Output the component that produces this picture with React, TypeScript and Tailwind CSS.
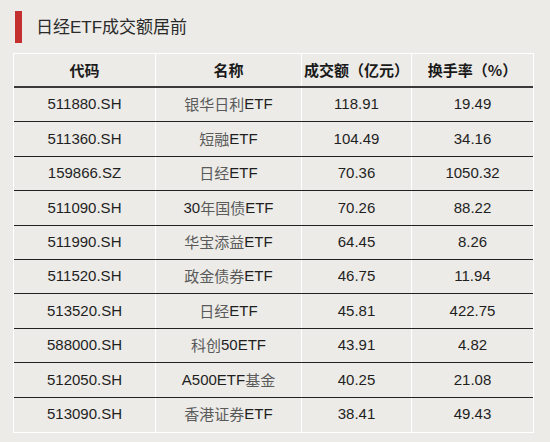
const rows: [string, string, string, string, string][] = [
  ["511880.SH", "银华日利", "ETF", "118.91", "19.49"],
  ["511360.SH", "短融", "ETF", "104.49", "34.16"],
  ["159866.SZ", "日经", "ETF", "70.36", "1050.32"],
  ["511090.SH", "30年国债", "ETF", "70.26", "88.22"],
  ["511990.SH", "华宝添益", "ETF", "64.45", "8.26"],
  ["511520.SH", "政金债券", "ETF", "46.75", "11.94"],
  ["513520.SH", "日经", "ETF", "45.81", "422.75"],
  ["588000.SH", "科创50", "ETF", "43.91", "4.82"],
  ["512050.SH", "A500ETF基金", "", "40.25", "21.08"],
  ["513090.SH", "香港证券", "ETF", "38.41", "49.43"],
]

const cjk = '"Noto Sans CJK SC", sans-serif'
const sans = '"Liberation Sans", "Noto Sans CJK SC", sans-serif'

function Name({ text, tail }: { text: string; tail: string }) {
  // split latin/digits from CJK so the CJK parts get the lighter grey
  const parts = (text + tail).split(/([A-Za-z0-9]+)/).filter(Boolean)
  return (
    <>
      {parts.map((p, i) =>
        /^[A-Za-z0-9]+$/.test(p) ? (
          <span key={i} className="text-[#1f1f1f]" style={{ fontFamily: sans }}>
            {p}
          </span>
        ) : (
          <span key={i} className="text-[#5a5a5a]" style={{ fontFamily: cjk }}>
            {p}
          </span>
        )
      )}
    </>
  )
}

export default function App() {
  return (
    <div className="h-[442px] w-[550px] bg-[#ecebe7] pt-[11px]">
      <div className="flex h-[32px] items-center pl-[15px]">
        <div className="h-[32px] w-[7px] bg-[#c4302f]" />
        <h1
          className="ml-[14px] text-[17px] leading-none text-[#2a2a2a]"
          style={{ fontFamily: sans }}
        >
          日经ETF成交额居前
        </h1>
      </div>

      <div className="ml-[13px] mt-[10px] w-[521px] border border-white">
        <div className="grid h-[34px] grid-cols-[142px_146px_110px_121px] border-b-2 border-[#3a3a3a] text-[15px] font-bold text-[#1a1a1a]">
          {["代码", "名称", "成交额（亿元）", "换手率（%）"].map((h, i) => (
            <div
              key={h}
              className={`flex items-center justify-center ${i < 3 ? "border-r border-white" : ""}`}
              style={{ fontFamily: cjk }}
            >
              {h}
            </div>
          ))}
        </div>
        {rows.map((r, ri) => (
          <div
            key={r[0]}
            className={`grid h-[34.4px] grid-cols-[142px_146px_110px_121px] text-[15px] text-[#1f1f1f] ${ri < rows.length - 1 ? "border-b border-[#222]" : ""}`}
            style={{ fontFamily: sans }}
          >
            <div className="flex items-center justify-center border-r border-white">{r[0]}</div>
            <div className="flex items-center justify-center border-r border-white">
              <Name text={r[1]} tail={r[2]} />
            </div>
            <div className="flex items-center justify-center border-r border-white">{r[3]}</div>
            <div className="flex items-center justify-center">{r[4]}</div>
          </div>
        ))}
      </div>
    </div>
  )
}
